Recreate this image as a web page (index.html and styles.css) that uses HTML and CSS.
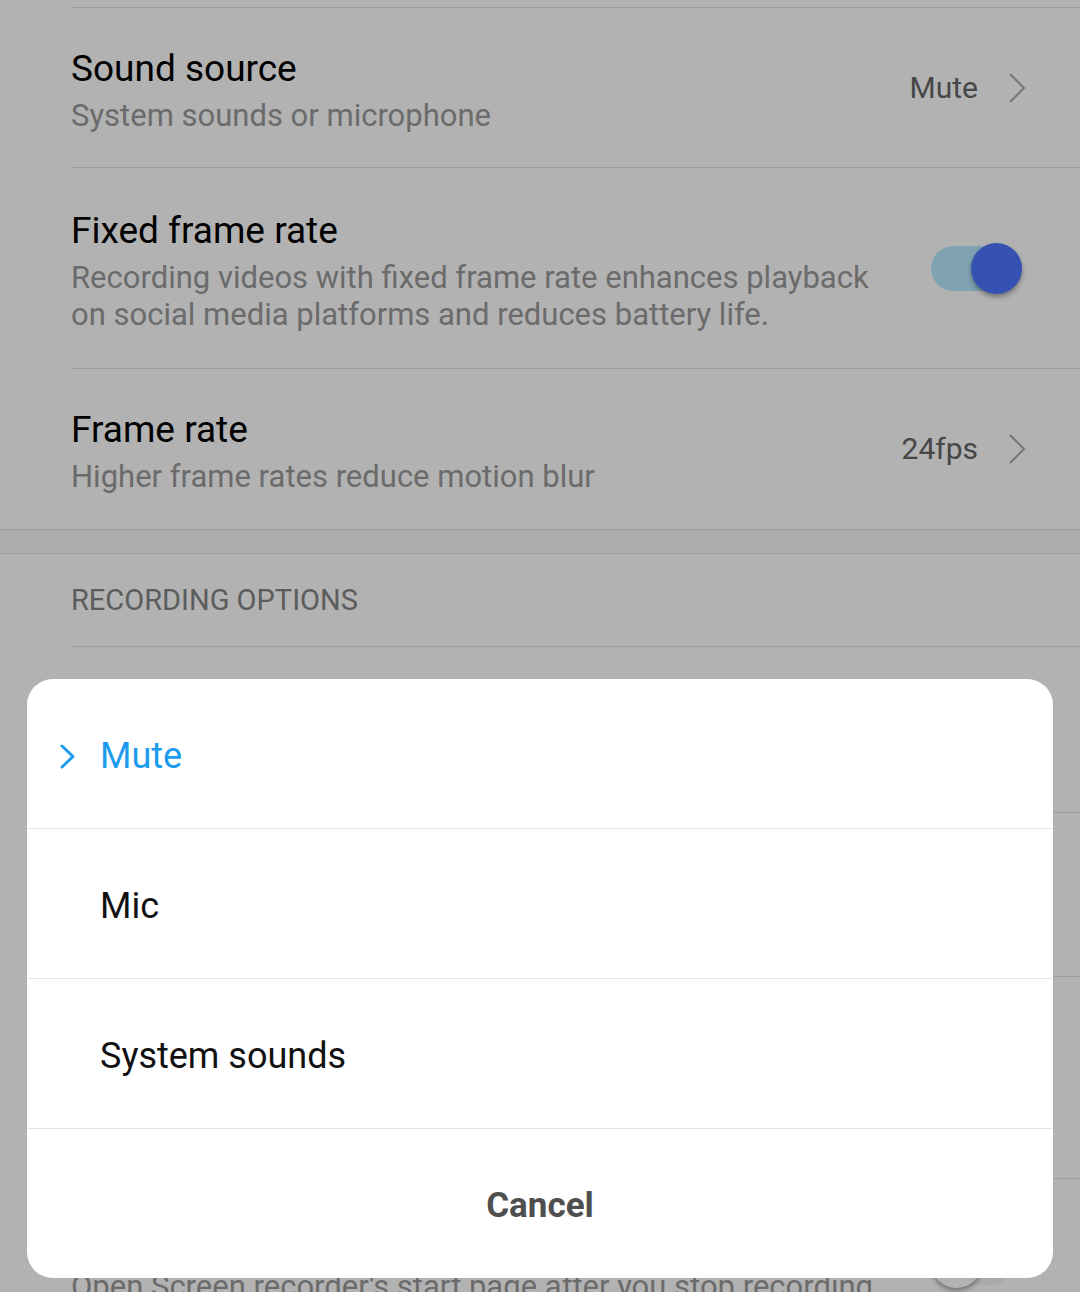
FILE: index.html
```html
<!DOCTYPE html>
<html lang="en">
<head>
    <meta charset="UTF-8">
    <meta name="viewport" content="width=device-width, initial-scale=1.0">
    <title>Screen recorder settings</title>
    <link rel="stylesheet" href="styles.css">
</head>
<body>
    <div class="settings">
        <div class="group">
            <div class="row row--top">
                <div class="row-text">
                    <div class="row-title">Sound source</div>
                    <div class="row-sub">System sounds or microphone</div>
                </div>
                <div class="row-value">Mute</div>
                <svg class="chevron" viewBox="0 0 18 32"><path d="M2 2 L16 16 L2 30"/></svg>
            </div>
            <div class="row row--multi">
                <div class="row-text">
                    <div class="row-title">Fixed frame rate</div>
                    <div class="row-sub">Recording videos with fixed frame rate enhances playback on social media platforms and reduces battery life.</div>
                </div>
                <div class="toggle toggle--on"><span class="toggle-track"></span><span class="toggle-knob"></span></div>
            </div>
            <div class="row">
                <div class="row-text">
                    <div class="row-title">Frame rate</div>
                    <div class="row-sub">Higher frame rates reduce motion blur</div>
                </div>
                <div class="row-value">24fps</div>
                <svg class="chevron" viewBox="0 0 18 32"><path d="M2 2 L16 16 L2 30"/></svg>
            </div>
        </div>

        <div class="group-gap"></div>

        <div class="group">
            <div class="group-title">RECORDING OPTIONS</div>
            <!-- rows covered by the dialog -->
            <div class="row row--hidden-a"></div>
            <div class="row row--hidden-b"></div>
            <div class="row row--hidden-c"></div>
            <div class="row row--last">
                <div class="row-text">
                    <div class="row-sub">Open Screen recorder's start page after you stop recording</div>
                </div>
                <div class="toggle"><span class="toggle-track"></span><span class="toggle-knob"></span></div>
            </div>
        </div>
    </div>

    <div class="scrim"></div>

    <div class="sheet">
        <div class="sheet-item sheet-item--selected">
            <svg class="check" viewBox="0 0 15 25"><path d="M2 2 L13 12.5 L2 23"/></svg>
            <span>Mute</span>
        </div>
        <div class="sheet-item">
            <span class="check"></span>
            <span>Mic</span>
        </div>
        <div class="sheet-item">
            <span class="check"></span>
            <span>System sounds</span>
        </div>
        <div class="sheet-cancel">Cancel</div>
    </div>
</body>
</html>
```

FILE: styles.css
```css
* {
    box-sizing: border-box;
}

body {
    margin: 0;
    font-family: 'Roboto', 'Noto Sans', sans-serif;
    background-color: #fff;
    color: #000;
    height: 1292px;
    overflow: hidden;
}

.settings {
    padding-top: 7px;
}

.group {
    background: #fff;
    border-bottom: 1px solid #e2e2e2;
}

.group-gap {
    height: 24px;
    background: #f6f6f6;
    border-bottom: 1px solid #e2e2e2;
}

.group-title {
    margin-left: 71px;
    height: 93px;
    line-height: 92px;
    font-size: 29px;
    color: #858585;
    border-bottom: 1px solid #e2e2e2;
}

.row {
    display: flex;
    align-items: center;
    margin-left: 71px;
    padding: 38px 54px 33px 0;
    border-bottom: 1px solid #e2e2e2;
}

.group .row:last-child {
    border-bottom: none;
    padding-bottom: 34px;
}

.row--top {
    border-top: 1px solid #e2e2e2;
}

.row--multi {
    padding-top: 40px;
    padding-bottom: 35px;
}

.row-text {
    flex: 1;
    min-width: 0;
}

.row-title {
    font-size: 37px;
    line-height: 46px;
}

.row-sub {
    margin-top: 5px;
    font-size: 31px;
    line-height: 37px;
    color: #9a9a9a;
    padding-right: 40px;
}

.row-value {
    font-size: 30px;
    color: #666;
    margin-right: 30px;
    margin-bottom: 5px;
}

.chevron {
    width: 18px;
    height: 32px;
    margin-bottom: 5px;
    fill: none;
    stroke: #aaa;
    stroke-width: 2;
}

.row--hidden-a { height: 166px; padding: 0; }
.row--hidden-b { height: 164px; padding: 0; }
.row--hidden-c { height: 202px; padding: 0; }

.row--last {
    align-items: flex-start;
    padding-top: 0;
}

.row--last .row-text {
    padding-top: 84px;
}

.row--last .toggle {
    margin-top: 58px;
}

/* switch */
.toggle {
    position: relative;
    width: 91px;
    height: 51px;
    margin-right: 4px;
    margin-bottom: 4px;
    flex-shrink: 0;
}

.toggle-track {
    position: absolute;
    left: 0;
    top: 3px;
    width: 82px;
    height: 45px;
    border-radius: 23px;
    background: #f3f3f3;
}

.toggle-knob {
    position: absolute;
    left: 0;
    top: 0;
    width: 51px;
    height: 51px;
    border-radius: 50%;
    background: #fff;
    box-shadow: 0 3px 5px rgba(0, 0, 0, 0.35);
}

.toggle--on .toggle-track {
    background: #b6eaff;
}

.toggle--on .toggle-knob {
    left: auto;
    right: 0;
    background: #4c74ff;
}

.scrim {
    position: fixed;
    top: 0;
    left: 0;
    width: 100%;
    height: 100%;
    background: rgba(0, 0, 0, 0.3);
}

/* bottom dialog */
.sheet {
    position: fixed;
    left: 27px;
    right: 27px;
    bottom: 14px;
    background: #fff;
    border-radius: 26px;
    overflow: hidden;
}

.sheet-item {
    display: flex;
    align-items: center;
    gap: 25px;
    height: 150px;
    padding-left: 33px;
    padding-top: 5px;
    font-size: 36px;
    color: #111;
    border-bottom: 1px solid #e4e4e4;
}

.sheet-item--selected {
    color: #1c9bef;
}

.check {
    width: 15px;
    height: 25px;
    fill: none;
    stroke: #1c9bef;
    stroke-width: 3;
    stroke-linecap: round;
    stroke-linejoin: round;
}

.sheet-cancel {
    height: 149px;
    line-height: 153px;
    text-align: center;
    font-size: 35px;
    font-weight: bold;
    color: #4f4f4f;
}
```
